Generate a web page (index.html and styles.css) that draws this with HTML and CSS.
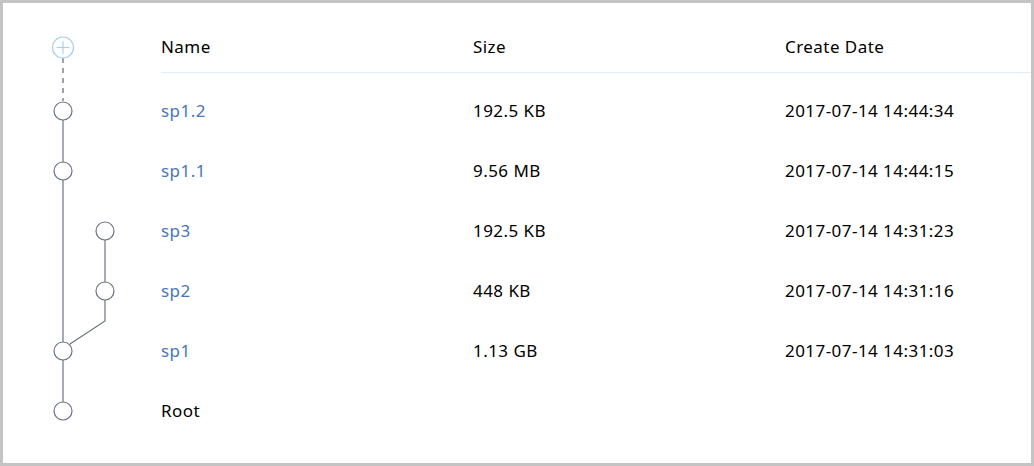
FILE: index.html
```html
<!DOCTYPE html>
<html>
<head>
<meta charset="utf-8">
<link rel="stylesheet" href="styles.css">
</head>
<body>
<div class="frame">
  <svg class="tree" width="158" height="460" viewBox="3 3 158 460">
    <line x1="63" y1="58" x2="63" y2="101" stroke="#5d6575" stroke-width="1.2" stroke-dasharray="5 5"/>
    <circle cx="63" cy="47.5" r="10.5" fill="#fff" stroke="#a6d0f2" stroke-width="1.2"/>
    <line x1="56.5" y1="47.5" x2="69.5" y2="47.5" stroke="#a6d0f2" stroke-width="1.1"/>
    <line x1="63" y1="41" x2="63" y2="54" stroke="#a6d0f2" stroke-width="1.1"/>
    <line x1="63" y1="120" x2="63" y2="402" stroke="#6b7382" stroke-width="1.2"/>
    <line x1="105" y1="240" x2="105" y2="282" stroke="#6b7382" stroke-width="1.2"/>
    <polyline points="105,300 105,321 70,344" fill="none" stroke="#6b7382" stroke-width="1.2"/>
    <g fill="#fff" stroke="#6b7382" stroke-width="1.2">
      <circle cx="63" cy="111" r="9"/>
      <circle cx="63" cy="171" r="9"/>
      <circle cx="105" cy="231" r="9"/>
      <circle cx="105" cy="291" r="9"/>
      <circle cx="63" cy="351" r="9"/>
      <circle cx="63" cy="411" r="9"/>
    </g>
  </svg>
  <div class="table">
    <div class="row head">
      <div class="c name">Name</div>
      <div class="c size">Size</div>
      <div class="c date">Create Date</div>
    </div>
    <div class="body">
      <div class="row"><div class="c name"><a class="link">sp1.2</a></div><div class="c size">192.5 KB</div><div class="c date">2017-07-14 14:44:34</div></div>
      <div class="row"><div class="c name"><a class="link">sp1.1</a></div><div class="c size">9.56 MB</div><div class="c date">2017-07-14 14:44:15</div></div>
      <div class="row"><div class="c name"><a class="link">sp3</a></div><div class="c size">192.5 KB</div><div class="c date">2017-07-14 14:31:23</div></div>
      <div class="row"><div class="c name"><a class="link">sp2</a></div><div class="c size">448 KB</div><div class="c date">2017-07-14 14:31:16</div></div>
      <div class="row"><div class="c name"><a class="link">sp1</a></div><div class="c size">1.13 GB</div><div class="c date">2017-07-14 14:31:03</div></div>
      <div class="row"><div class="c name">Root</div><div class="c size"></div><div class="c date"></div></div>
    </div>
  </div>
</div>
</body>
</html>
```
FILE: styles.css
```css
* { box-sizing: border-box; }
html, body { margin: 0; padding: 0; background: #fff; }
.frame {
  width: 1034px;
  height: 466px;
  border: 3px solid #c4c4c4;
  display: flex;
  font-family: "Noto Sans", sans-serif;
  font-size: 17px;
  letter-spacing: 0.45px;
  color: #000;
  overflow: hidden;
}
.tree { flex: none; display: block; }
.table { flex: 1; display: flex; flex-direction: column; padding-top: 18px; }
.row { display: flex; align-items: center; height: 60px; }
.row.head { height: 52px; border-bottom: 1px solid #e4ecf3; }
.body { padding-top: 7px; }
.c { flex: none; white-space: nowrap; }
.name { width: 312px; }
.size { width: 312px; }
.date { flex: 1; }
.link { color: #4776bd; text-decoration: none; }
```
